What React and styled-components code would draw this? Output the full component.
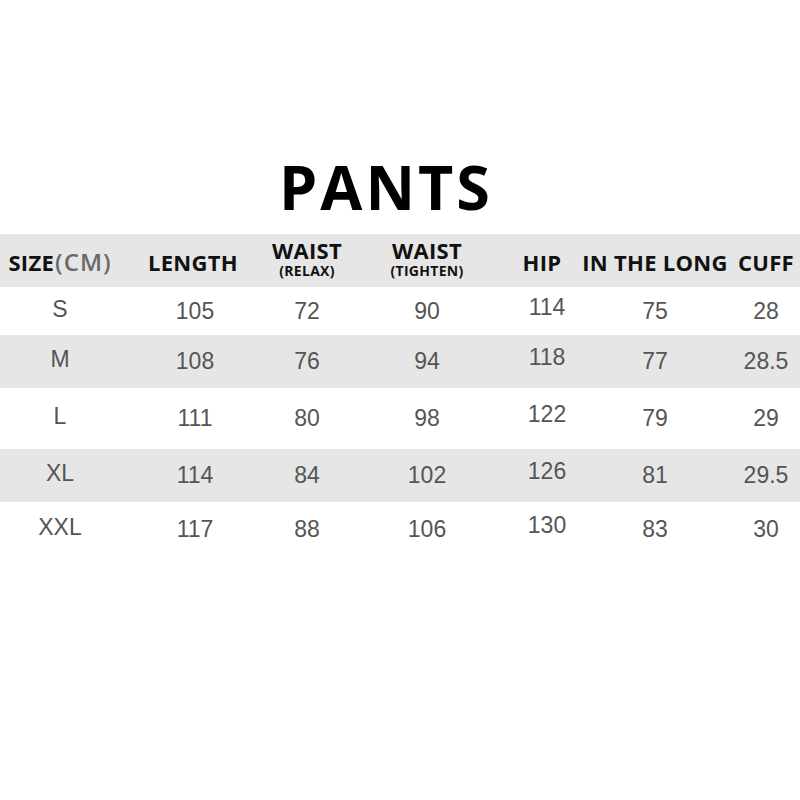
import React from 'react'
import styled, { createGlobalStyle } from 'styled-components'

const GlobalStyle = createGlobalStyle`
  html, body {
    margin: 0;
    padding: 0;
    background: #fff;
  }
`

const Page = styled.div`
  width: 800px;
  height: 800px;
  background: #fff;
  padding-top: 156px;
  box-sizing: border-box;
`

const Title = styled.h1`
  margin: 0 0 16px 0;
  padding-right: 28px;
  font-family: "Open Sans", sans-serif;
  font-weight: 700;
  font-size: 61px;
  line-height: 62px;
  color: #000;
  text-align: center;
  letter-spacing: 3px;
`

const COLS = '120px 146px 82px 158px 72px 154px 68px'

const HeadRow = styled.div`
  display: grid;
  grid-template-columns: ${COLS};
  height: 53px;
  background: #e6e6e6;
  align-items: center;
`

const HeadCell = styled.div`
  display: flex;
  flex-direction: column;
  align-items: center;
  font-family: "Open Sans", sans-serif;
  font-weight: 700;
  font-size: 22px;
  line-height: ${p => p.$stack ? '19px' : '22px'};
  letter-spacing: 0.3px;
  color: #111;
  white-space: nowrap;
  padding-top: ${p => p.$stack ? '0' : '2px'};
  padding-bottom: ${p => p.$stack ? '3px' : '0'};
`

const Unit = styled.span`
  color: #6a6a6a;
  font-weight: 600;
  font-size: 24px;
  letter-spacing: 1px;
  margin-left: 1px;
`

const Sub = styled.span`
  font-size: 14px;
  line-height: 15px;
  margin-top: 3px;
  letter-spacing: 0.3px;
`

const Row = styled.div`
  display: grid;
  grid-template-columns: ${COLS};
  height: ${p => p.$h}px;
  background: ${p => p.$shade ? '#e6e6e6' : '#fff'};
  align-items: center;
`

const Cell = styled.div`
  text-align: center;
  font-family: "Liberation Sans", Arial, sans-serif;
  font-size: 23px;
  color: #555;
  padding-bottom: ${p => p.$raise || 0}px;
  padding-left: ${p => p.$shift || 0}px;
`

const rows = [
  { h: 48, cells: ['S', '105', '72', '90', '114', '75', '28'] },
  { h: 53, cells: ['M', '108', '76', '94', '118', '77', '28.5'] },
  { h: 61, cells: ['L', '111', '80', '98', '122', '79', '29'] },
  { h: 53, cells: ['XL', '114', '84', '102', '126', '81', '29.5'] },
  { h: 55, cells: ['XXL', '117', '88', '106', '130', '83', '30'] },
]

const raise = [4, 0, 0, 0, 8, 0, 0]
const shift = [-4, 4, 0, 0, 10, 0, 0]

export default function App() {
  return (
    <Page>
      <GlobalStyle />
      <Title>PANTS</Title>
      <HeadRow>
        <HeadCell>
          <span>SIZE<Unit>(CM)</Unit></span>
        </HeadCell>
        <HeadCell>LENGTH</HeadCell>
        <HeadCell $stack>
          WAIST
          <Sub>(RELAX)</Sub>
        </HeadCell>
        <HeadCell $stack>
          WAIST
          <Sub>(TIGHTEN)</Sub>
        </HeadCell>
        <HeadCell>HIP</HeadCell>
        <HeadCell>IN THE LONG</HeadCell>
        <HeadCell>CUFF</HeadCell>
      </HeadRow>
      {rows.map((r, i) => (
        <Row key={r.cells[0]} $h={r.h} $shade={i % 2 === 1}>
          {r.cells.map((c, j) => (
            <Cell key={j} $raise={raise[j]} $shift={shift[j]}>{c}</Cell>
          ))}
        </Row>
      ))}
    </Page>
  )
}
